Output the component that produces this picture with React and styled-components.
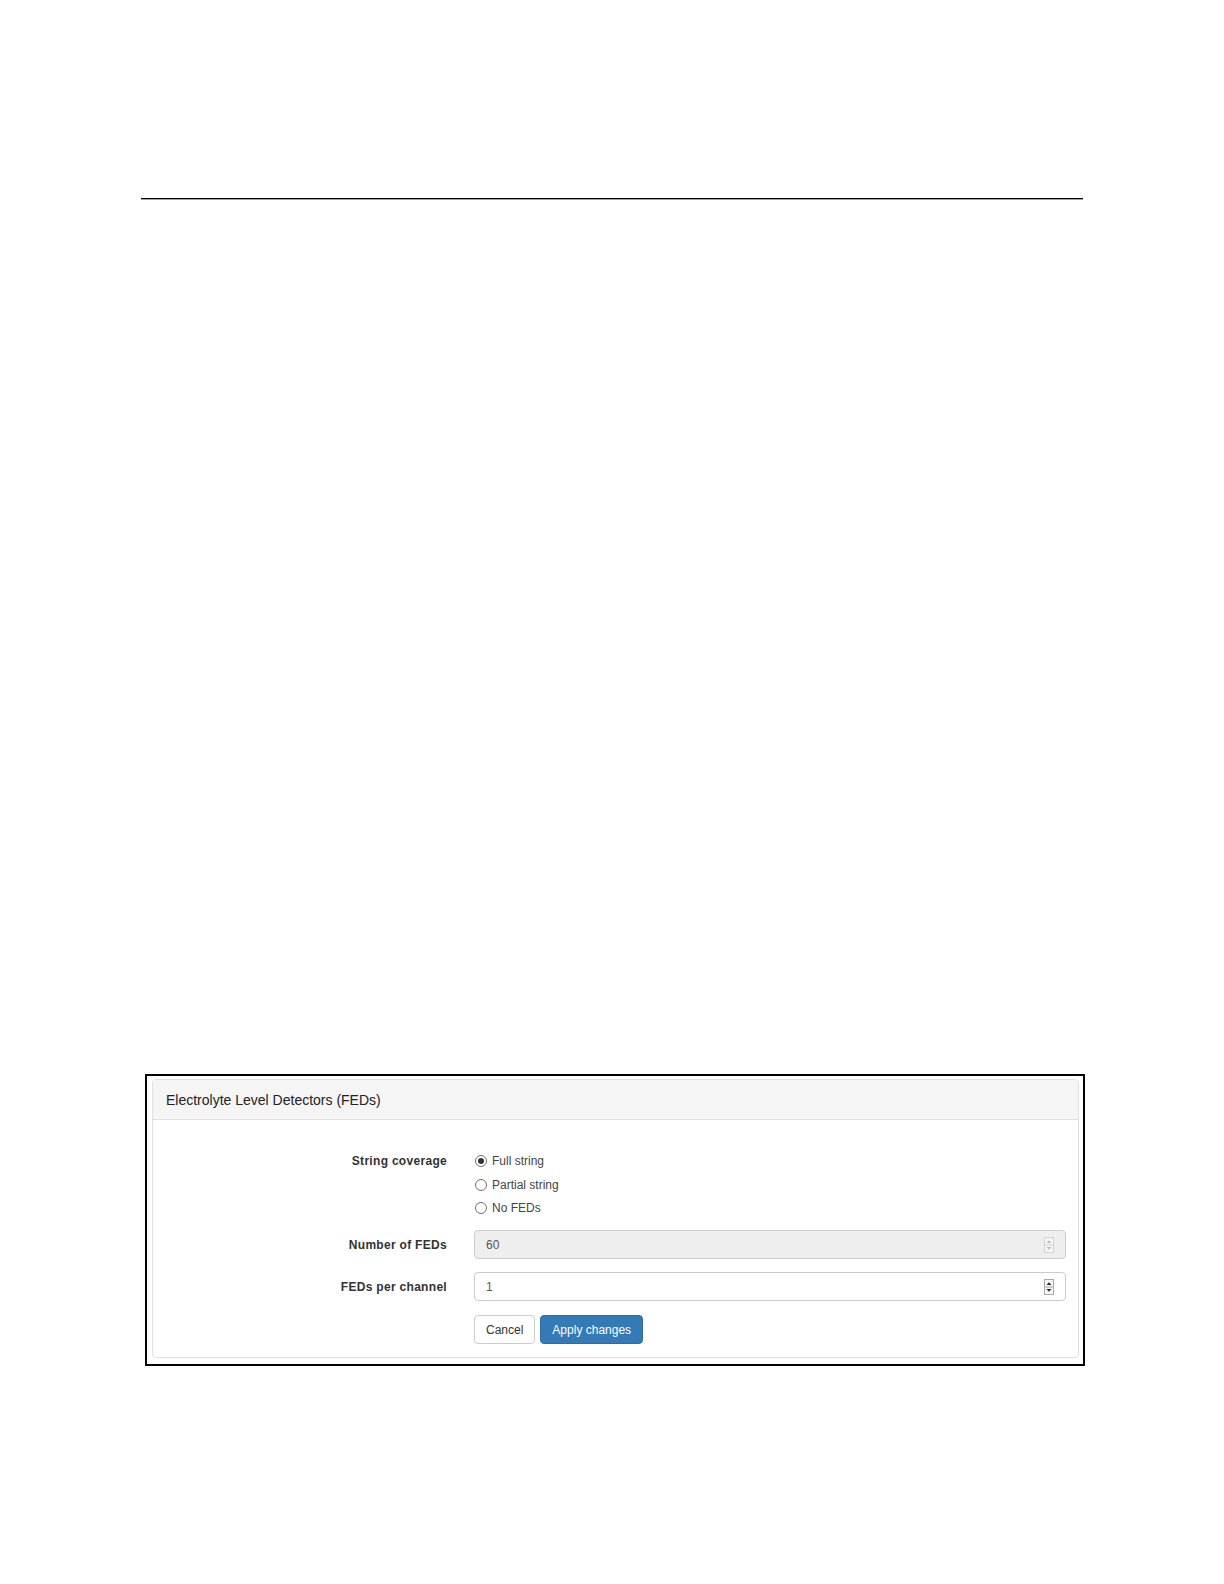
import React, { useState } from "react";
import styled, { createGlobalStyle } from "styled-components";

const GlobalStyle = createGlobalStyle`
  html, body {
    margin: 0;
    padding: 0;
    background: #fff;
  }
  body {
    font-family: "Liberation Sans", Arial, sans-serif;
    color: #333;
  }
`;

const coverageOptions = ["Full string", "Partial string", "No FEDs"];

function Spinner({ disabled }) {
  const stroke = disabled ? "#d4d4d4" : "#a9a9a9";
  const fill = disabled ? "#bdbdbd" : "#222";
  return (
    <SpinBox viewBox="0 0 10 16" width="10" height="16">
      <rect x="0.5" y="0.5" width="9" height="15" fill="#f4f4f4" stroke={stroke} />
      <line x1="0.5" y1="8" x2="9.5" y2="8" stroke={stroke} />
      <path d="M5 3.2 L7.4 6 H2.6 Z" fill={fill} />
      <path d="M5 12.8 L7.4 10 H2.6 Z" fill={fill} />
    </SpinBox>
  );
}

function NumberField({ value, disabled }) {
  return (
    <Field $disabled={disabled}>
      <span>{value}</span>
      <Spinner disabled={disabled} />
    </Field>
  );
}

function App() {
  const [coverage, setCoverage] = useState("Full string"); // selected radio

  return (
    <Page>
      <GlobalStyle />
      <Rule />
      <Figure>
        <Panel>
          <PanelHeading>Electrolyte Level Detectors (FEDs)</PanelHeading>
          <PanelBody>
            <FormRow $top>
              <Label $tall>String coverage</Label>
              <RadioList>
                {coverageOptions.map((opt) => (
                  <RadioItem key={opt} onClick={() => setCoverage(opt)}>
                    <RadioDot $checked={coverage === opt} />
                    {opt}
                  </RadioItem>
                ))}
              </RadioList>
            </FormRow>
            <FormRow>
              <Label>Number of FEDs</Label>
              <NumberField value="60" disabled />
            </FormRow>
            <FormRow>
              <Label>FEDs per channel</Label>
              <NumberField value="1" />
            </FormRow>
            <FormRow>
              <span />
              <Actions>
                <Button>Cancel</Button>
                <Button $primary>Apply changes</Button>
              </Actions>
            </FormRow>
          </PanelBody>
        </Panel>
      </Figure>
    </Page>
  );
}

const Page = styled.div`
  min-height: 1584px;
  padding: 198px 141px 0;
  box-sizing: border-box;
`;

const Rule = styled.div`
  height: 1px;
  background: #000;
  box-shadow: 0 0.5px 0 #444;
`;

const Figure = styled.div`
  width: 940px;
  margin: 875px 0 0 4px;
  border: 2px solid #000;
  padding: 3px 4px 6px 5px;
  box-sizing: border-box;
`;

const Panel = styled.div`
  border: 1px solid #e0e0e0;
  border-radius: 4px;
  background: #fff;
  overflow: hidden;
`;

const PanelHeading = styled.div`
  height: 39px;
  display: flex;
  align-items: center;
  padding: 0 13px;
  background: #f5f5f5;
  border-bottom: 1px solid #e0e0e0;
  font-size: 14px;
  color: #222;
`;

const PanelBody = styled.div`
  display: flex;
  flex-direction: column;
  gap: 13px;
  padding: 29.5px 12px 13px 0;
`;

const FormRow = styled.div`
  display: grid;
  grid-template-columns: 294px 1fr;
  column-gap: 27px;
  align-items: ${(p) => (p.$top ? "start" : "center")};
`;

const Label = styled.label`
  text-align: right;
  font-size: 12px;
  font-weight: bold;
  letter-spacing: 0.3px;
  color: #333;
  line-height: ${(p) => (p.$tall ? "23.5px" : "normal")};
`;

const RadioList = styled.div`
  display: flex;
  flex-direction: column;
  margin-bottom: -3px;
`;

const RadioItem = styled.div`
  display: flex;
  align-items: center;
  gap: 5px;
  height: 23.5px;
  padding-left: 1px;
  font-size: 12px;
  color: #444;
  cursor: pointer;
`;

const RadioDot = styled.span`
  width: 10px;
  height: 10px;
  border: 1px solid #6f6f6f;
  border-radius: 50%;
  display: grid;
  place-items: center;
  background: #fff;

  &::after {
    content: "";
    width: 6px;
    height: 6px;
    border-radius: 50%;
    background: ${(p) => (p.$checked ? "#333" : "transparent")};
  }
`;

const Field = styled.div`
  height: 29px;
  box-sizing: border-box;
  display: flex;
  align-items: center;
  justify-content: space-between;
  padding: 0 11px 0 11px;
  border: 1px solid #ccc;
  border-radius: 4px;
  background: ${(p) => (p.$disabled ? "#eee" : "#fff")};
  font-size: 12px;
  color: #555;
`;

const SpinBox = styled.svg`
  display: block;
`;

const Actions = styled.div`
  display: flex;
  gap: 5px;
  margin-top: 1px;
`;

const Button = styled.button`
  height: 29px;
  padding: 0 11px;
  font-family: "Liberation Sans", Arial, sans-serif;
  font-size: 12px;
  border-radius: 4px;
  border: 1px solid ${(p) => (p.$primary ? "#2e6da4" : "#ccc")};
  background: ${(p) => (p.$primary ? "#337ab7" : "#fff")};
  color: ${(p) => (p.$primary ? "#fff" : "#333")};
  cursor: pointer;
`;

export default App;
